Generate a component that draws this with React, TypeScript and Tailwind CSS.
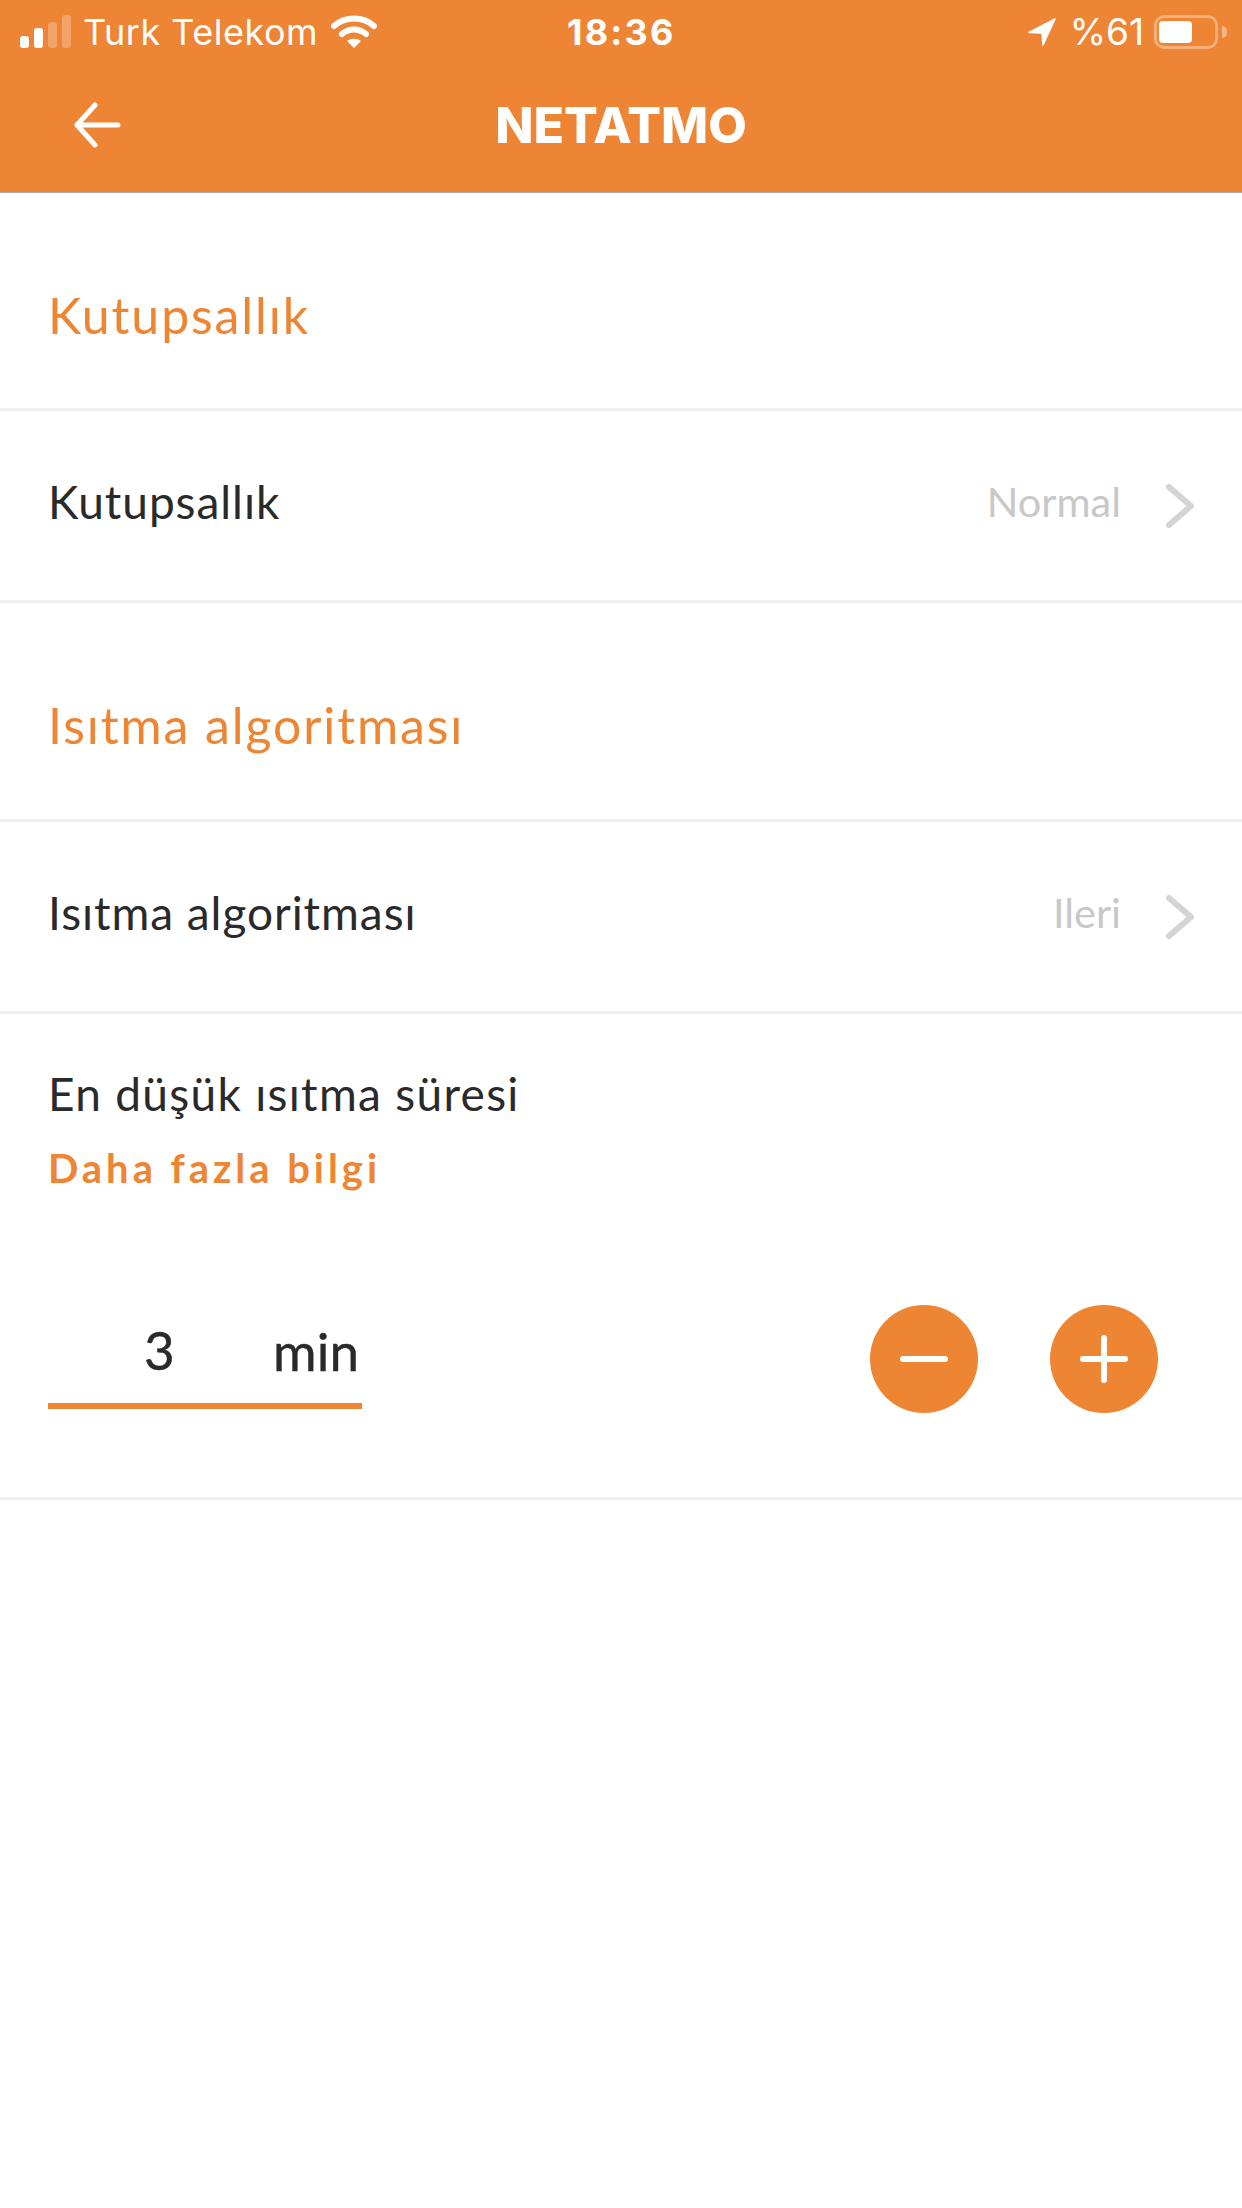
import { Minus, Plus } from "lucide-react";

const bodyFont = "font-['Lato','Noto_Sans',sans-serif]";

function Divider() {
  return <div className="h-[3px] bg-[#f0f0f0]" />;
}

function SectionTitle({ children, tall }: { children: string; tall?: boolean }) {
  return (
    <div
      className={`flex items-center px-12 pt-[28px] text-[50px] leading-none tracking-[1.9px] text-[#ee8533] ${
        tall ? "h-[216px]" : "h-[215px]"
      }`}
    >
      {children}
    </div>
  );
}

function SettingRow({ label, value }: { label: string; value: string }) {
  return (
    <div className="flex h-[189px] items-center justify-between pl-12 pr-[46px]">
      <span className="mb-2 text-[46px] leading-none tracking-[0.95px] text-[#2a2a2a]">{label}</span>
      <div className="flex items-center gap-[43px]">
        <span className="mb-2 text-[41.5px] leading-none text-[#c8c8c8]">{value}</span>
        <svg className="ml-[1px]" width="31" height="46" viewBox="1 0 31 46" fill="none">
          <path
            d="M5 4l22 19L5 42"
            stroke="#d4d4d4"
            strokeWidth="6"
            strokeLinecap="round"
            strokeLinejoin="round"
          />
        </svg>
      </div>
    </div>
  );
}

function SignalBars() {
  return (
    <div className="flex items-end gap-[5px]">
      <div className="h-[12px] w-[9px] rounded-[3px] bg-white" />
      <div className="h-[20px] w-[9px] rounded-[3px] bg-white" />
      <div className="h-[26px] w-[9px] rounded-[3px] bg-white/25" />
      <div className="h-[33px] w-[9px] rounded-[3px] bg-white/25" />
    </div>
  );
}

function StatusBar() {
  return (
    <div className="relative flex h-[62px] items-center justify-between pl-5 pr-[15px] pt-[1px] font-['Inter',sans-serif] text-white">
      <div className="flex items-center">
        <SignalBars />
        <span className="ml-[12px] text-[36px] leading-none tracking-[0.5px]">Turk Telekom</span>
        <svg className="ml-[13px]" width="46" height="34" viewBox="0 0 46 34" fill="none">
          <path d="M3 11c11-10 29-10 40 0" stroke="white" strokeWidth="6" strokeLinecap="round" />
          <path d="M11 19c7-6 17-6 24 0" stroke="white" strokeWidth="6" strokeLinecap="round" />
          <path d="M23 33l-7-7c4-3 10-3 14 0z" fill="white" />
        </svg>
      </div>
      <span className="absolute left-[567px] text-[36px] font-bold leading-none tracking-[2.2px]">18:36</span>
      <div className="flex items-center">
        <svg width="28" height="28" viewBox="0 0 28 28" fill="white">
          <path d="M27 1L1 14.5l13 0.5 1 12z" stroke="white" strokeWidth="1.5" strokeLinejoin="round" />
        </svg>
        <span className="ml-[14px] text-[37px] leading-none">%61</span>
        <div className="ml-[10px] flex h-[34px] w-[64px] items-center rounded-[10px] border-[3px] border-white/35 px-[2px]">
          <div className="h-[22px] w-[33px] rounded-[4px] bg-white" />
        </div>
        <div className="ml-1 h-[12px] w-[5px] rounded-r-full bg-white/40" />
      </div>
    </div>
  );
}

function NavBar() {
  return (
    <div className="relative flex h-[130px] items-center justify-center pb-[4px]">
      <svg
        className="absolute left-[73px] top-[40px]"
        width="50"
        height="46"
        viewBox="0 0 50 46"
        fill="none"
      >
        <path
          d="M45 23H4M22 3L4 23l18 20"
          stroke="white"
          strokeWidth="5"
          strokeLinecap="round"
          strokeLinejoin="round"
        />
      </svg>
      <span className="font-['Inter',sans-serif] text-[50px] font-extrabold leading-none text-white">
        NETATMO
      </span>
    </div>
  );
}

export default function App() {
  return (
    <div className={`min-h-[2208px] bg-white ${bodyFont}`}>
      <header className="h-[193px] border-b border-[#ababab] bg-[#ee8534]">
        <StatusBar />
        <NavBar />
      </header>

      <SectionTitle>Kutupsallık</SectionTitle>
      <Divider />
      <SettingRow label="Kutupsallık" value="Normal" />
      <Divider />
      <SectionTitle tall>Isıtma algoritması</SectionTitle>
      <Divider />
      <SettingRow label="Isıtma algoritması" value="Ileri" />
      <Divider />

      <section className="h-[483px] pl-12 pr-[84px] pt-[57px]">
        <div className="text-[46px] leading-[46px] tracking-[1.3px] text-[#2a2a2a]">En düşük ısıtma süresi</div>
        <div className="mt-[29px] text-[40px] font-bold leading-[44px] tracking-[3.95px] text-[#ee8533]">
          Daha fazla bilgi
        </div>
        <div className="mt-[115px] flex items-start justify-between">
          <div className="flex h-[104px] w-[314px] items-center justify-between border-b-[6px] border-[#ee8533] pb-[7px] pl-[96px] pr-[3px] text-[53px] leading-none text-[#2a2a2a] [-webkit-text-stroke:0.4px_#2a2a2a]">
            <span className="mb-[2px]">3</span>
            <span>min</span>
          </div>
          <div className="flex gap-[72px]">
            <button className="flex h-[108px] w-[108px] items-center justify-center rounded-full bg-[#ee8533] text-white">
              <Minus size={72} strokeWidth={2} />
            </button>
            <button className="flex h-[108px] w-[108px] items-center justify-center rounded-full bg-[#ee8533] text-white">
              <Plus size={72} strokeWidth={2} />
            </button>
          </div>
        </div>
      </section>
      <Divider />
    </div>
  );
}
